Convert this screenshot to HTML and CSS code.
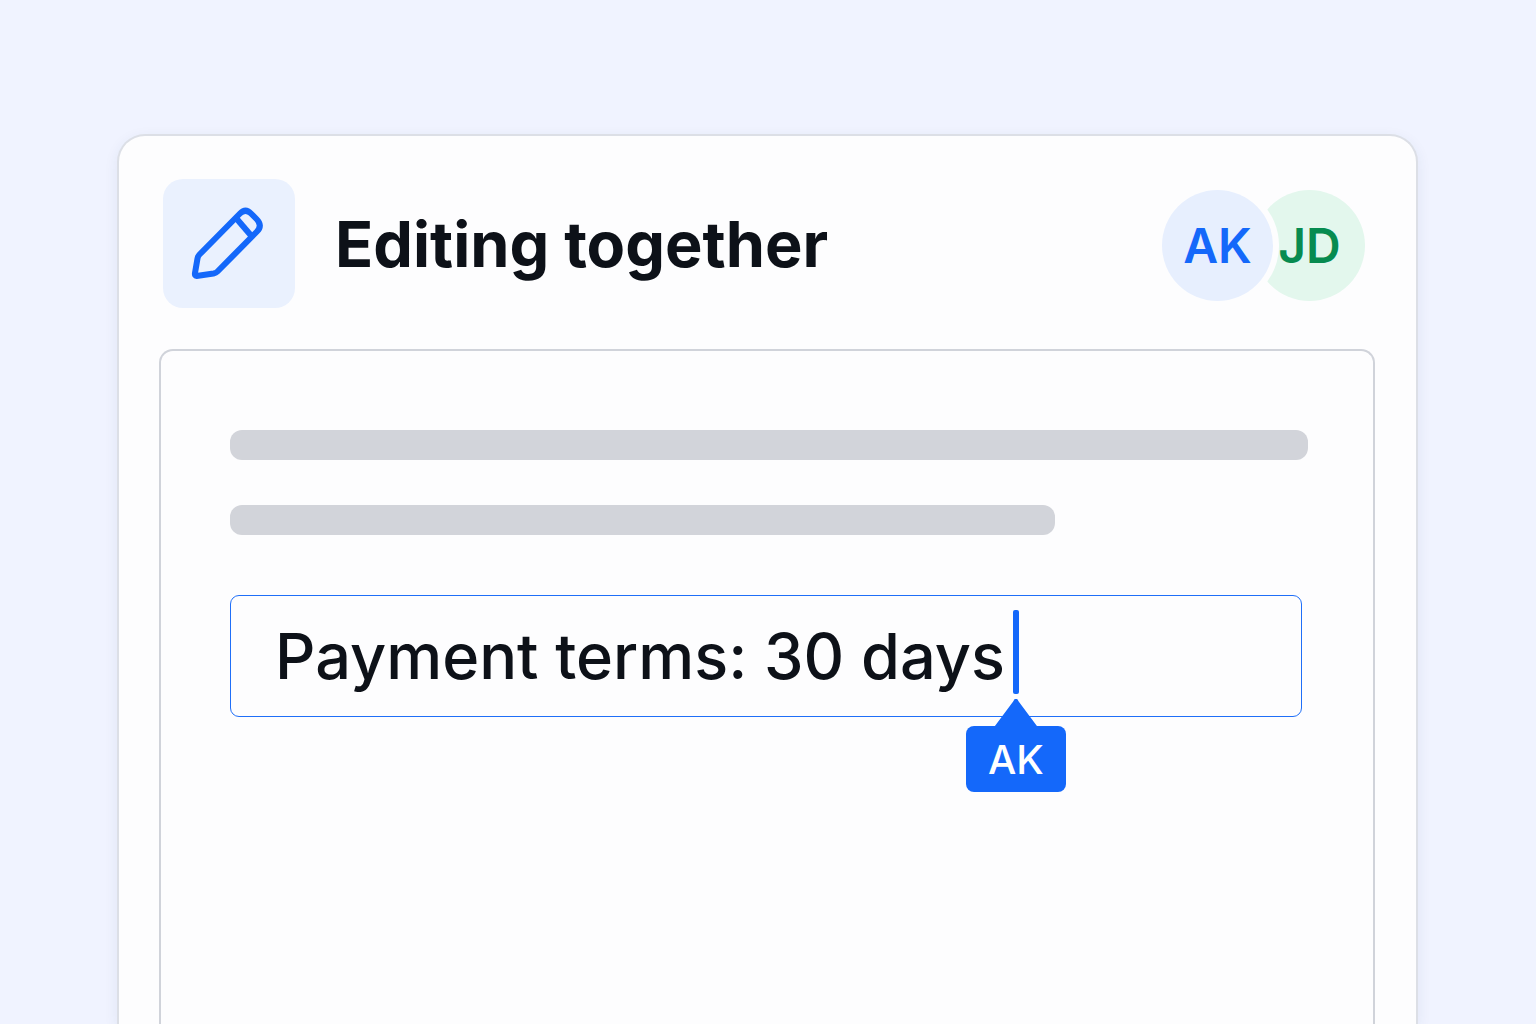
FILE: index.html
```html
<!DOCTYPE html>
<html lang="en">
<head>
  <meta charset="utf-8">
  <meta name="viewport" content="width=device-width, initial-scale=1">
  <title>Editing together</title>
  <link rel="stylesheet" href="styles.css">
</head>
<body>
  <main class="card">
    <header class="card-header">
      <span class="icon-tile">
        <svg class="pencil" viewBox="0 0 80 80" aria-hidden="true">
          <path d="M7.500 72 Q5.500 72 6 69 L8.500 54.500 Q9 52 10.500 50.500 L51 9.500 Q56.500 4 62 9.500 L67.500 15 Q74 21.500 68 27.500 L28.500 67.500 Q27 69 24.500 69.500 Z"/>
          <path d="M47 14 L62 31.500"/>
        </svg>
      </span>
      <h1 class="title">Editing together</h1>
      <ul class="avatars">
        <li class="avatar avatar-blue">AK</li>
        <li class="avatar avatar-green">JD</li>
      </ul>
    </header>
    <section class="document">
      <div class="line"></div>
      <div class="line line-short"></div>
      <div class="field">
        <input class="field-input" type="text" value="Payment terms: 30 days" size="20" aria-label="Contract clause">
        <span class="caret">
          <span class="flag">AK</span>
        </span>
      </div>
    </section>
  </main>
</body>
</html>
```
FILE: styles.css
```css
*,
*::before {
  box-sizing: border-box;
}

body {
  display: flex;
  min-height: 100vh;
  margin: 0;
  padding: 134px 118px 0 117px;
  background: #f0f3ff;
  color: #0d1118;
  font-family: Inter, "Liberation Sans", sans-serif;
}

.card {
  display: flex;
  flex: 1;
  flex-direction: column;
  gap: 41px;
  min-width: 0;
  padding: 43px 41px 0 40px;
  border: 2px solid #dcdfe6;
  border-bottom: 0;
  border-radius: 28px 28px 0 0;
  background: #fdfdfe;
  box-shadow: 0 4px 14px rgba(40, 60, 120, 0.08);
}

.card-header {
  display: flex;
  align-items: center;
  gap: 40px;
  padding: 0 10px 0 4px;
}

.icon-tile {
  display: grid;
  flex: none;
  place-items: center;
  width: 132px;
  height: 129px;
  border-radius: 20px;
  background: #eaf1fe;
}

.pencil {
  width: 80px;
  height: 80px;
  fill: none;
  stroke: #1468fa;
  stroke-width: 6;
  stroke-linejoin: round;
}

.title {
  flex: 1;
  margin: 0;
  font-size: 63px;
  font-weight: 700;
  line-height: 80px;
}

.avatars {
  display: flex;
  margin: 0;
  padding: 4px 0 0;
  list-style: none;
}

.avatar {
  display: grid;
  place-items: center;
  width: 111px;
  height: 111px;
  border-radius: 50%;
  font-size: 48px;
  font-weight: 600;
}

.avatar-blue {
  z-index: 1;
  background: #e7effe;
  box-shadow: 0 0 0 6px #fdfdfe;
  color: #1468fa;
}

.avatar-green {
  margin-left: -19px;
  background: #e3f7ed;
  color: #078b50;
}

.document {
  flex: 1;
  padding: 79px 65px 0 69px;
  border: 2px solid #d0d3da;
  border-bottom: 0;
  border-radius: 14px 14px 0 0;
}

.line {
  height: 30px;
  margin-bottom: 45px;
  border-radius: 12px;
  background: #d2d4da;
}

.line-short {
  width: 76.5%;
  margin-bottom: 60px;
}

.field {
  display: flex;
  align-items: center;
  gap: 8px;
  height: 122px;
  margin-right: 6px;
  padding-left: 44px;
  border: 1px solid #1f6ff8;
  border-radius: 9px;
}

.field-input {
  min-width: 0;
  height: 96px;
  padding: 0;
  border: 0;
  outline: 0;
  background: none;
  color: inherit;
  font: 500 63px/96px Inter, "Liberation Sans", sans-serif;
  field-sizing: content;
}

.caret {
  position: relative;
  flex: none;
  align-self: flex-start;
  width: 6px;
  height: 84px;
  margin-top: 14px;
  border-radius: 2px;
  background: #1468fa;
}

.flag {
  position: absolute;
  top: 116px;
  left: 50%;
  display: grid;
  place-items: center;
  width: 100px;
  height: 66px;
  border-radius: 8px;
  background: #1468fa;
  color: #fff;
  font-size: 40px;
  font-weight: 500;
  transform: translateX(-50%);
}

.flag::before {
  position: absolute;
  bottom: 100%;
  width: 42px;
  height: 27px;
  background: #1468fa;
  clip-path: polygon(0 100%, 43% 10%, 47% 0, 53% 0, 57% 10%, 100% 100%);
  content: "";
}
```
